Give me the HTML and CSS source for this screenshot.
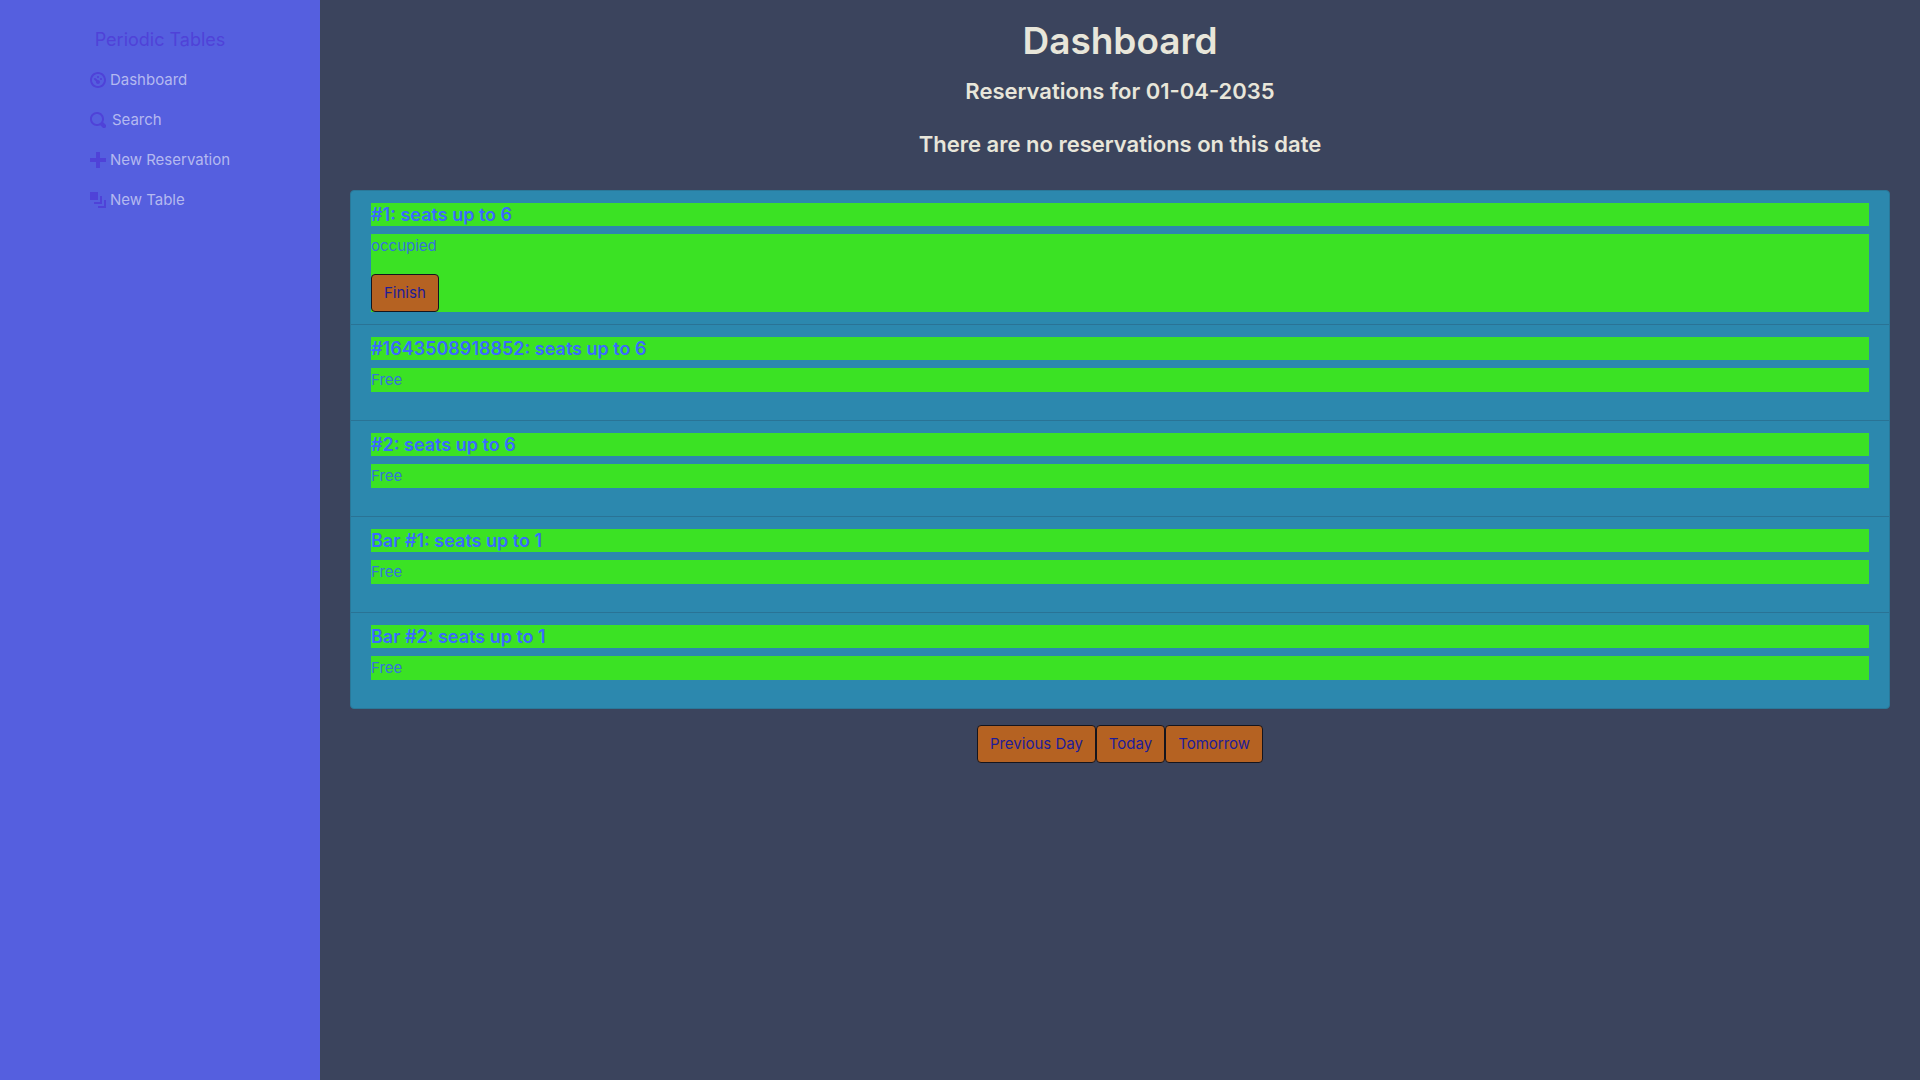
FILE: index.html
```html
<!DOCTYPE html>
<html lang="en">
<head>
<meta charset="utf-8">
<title>Periodic Tables</title>
<link rel="stylesheet" href="styles.css">
</head>
<body>
<div class="layout">
  <nav class="sidebar">
    <a class="brand" href="#">Periodic Tables</a>
    <ul class="menu">
      <li><a class="menu-link" href="#"><svg class="icon" viewBox="0 0 8 8" aria-hidden="true"><path d="M4 0c-2.2 0-4 1.8-4 4s1.8 4 4 4 4-1.8 4-4-1.8-4-4-4zm0 1c1.66 0 3 1.34 3 3s-1.34 3-3 3-3-1.34-3-3 1.34-3 3-3zm0 1c-.28 0-.5.22-.5.5s.22.5.5.5.5-.22.5-.5-.22-.5-.5-.5zm-1.66 1a.5.5 0 0 0-.19.84l.91.91c-.02.08-.06.16-.06.25 0 .55.45 1 1 1s1-.45 1-1-.45-1-1-1c-.09 0-.17.04-.25.06l-.91-.91a.5.5 0 0 0-.5-.15zm3.16 0c-.28 0-.5.22-.5.5s.22.5.5.5.5-.22.5-.5-.22-.5-.5-.5z"/></svg>Dashboard</a></li>
      <li><a class="menu-link menu-link-wide" href="#"><svg class="icon" viewBox="0 0 8 8" aria-hidden="true"><path d="M3.5 0c-1.93 0-3.5 1.57-3.5 3.5s1.57 3.5 3.5 3.5c.59 0 1.17-.14 1.66-.41a1 1 0 0 0 .13.13l1 1a1.02 1.02 0 1 0 1.44-1.44l-1-1a1 1 0 0 0-.16-.13c.27-.49.44-1.06.44-1.66 0-1.93-1.55-3.5-3.5-3.5zm0 1c1.39 0 2.5 1.11 2.5 2.5 0 .66-.24 1.27-.66 1.72l-.03.03a1 1 0 0 0-.13.13c-.44.4-1.04.63-1.69.63-1.39 0-2.5-1.11-2.5-2.5s1.11-2.5 2.5-2.5z"/></svg>Search</a></li>
      <li><a class="menu-link" href="#"><svg class="icon" viewBox="0 0 8 8" aria-hidden="true"><path d="M3 0v3h-3v2h3v3h2v-3h3v-2h-3v-3h-2z"/></svg>New Reservation</a></li>
      <li><a class="menu-link" href="#"><svg class="icon" viewBox="0 0 8 8" aria-hidden="true"><path d="M0 0v4h4v-4h-4zm5 2v3h-3v1h4v-4h-1zm2 2v3h-3v1h4v-4h-1z"/></svg>New Table</a></li>
    </ul>
  </nav>
  <main class="content">
    <h1 class="title">Dashboard</h1>
    <h2 class="subtitle">Reservations for 01-04-2035</h2>
    <h2 class="subtitle notice">There are no reservations on this date</h2>
    <ul class="tables">
      <li class="table-item">
        <h3 class="table-name">#1: seats up to 6</h3>
        <div class="status"><p class="status-text">occupied</p><button class="btn" type="button">Finish</button></div>
      </li>
      <li class="table-item">
        <h3 class="table-name">#1643508918852: seats up to 6</h3>
        <p class="status-text">Free</p>
      </li>
      <li class="table-item">
        <h3 class="table-name">#2: seats up to 6</h3>
        <p class="status-text">Free</p>
      </li>
      <li class="table-item">
        <h3 class="table-name">Bar #1: seats up to 1</h3>
        <p class="status-text">Free</p>
      </li>
      <li class="table-item">
        <h3 class="table-name">Bar #2: seats up to 1</h3>
        <p class="status-text">Free</p>
      </li>
    </ul>
    <div class="day-nav">
      <button class="btn" type="button">Previous Day</button>
      <button class="btn" type="button">Today</button>
      <button class="btn" type="button">Tomorrow</button>
    </div>
  </main>
</div>
</body>
</html>
```
FILE: styles.css
```css
*, *::before, *::after { box-sizing: border-box; }

body {
  margin: 0;
  font-family: Inter, "Liberation Sans", sans-serif;
  font-size: 15px;
  line-height: 24px;
  background: #3b445d;
  color: #e8e6da;
}

h1, h2, h3, p, ul { margin: 0; padding: 0; }
ul { list-style: none; }

.layout {
  display: grid;
  grid-template-columns: 1fr 5fr;
  min-height: 100vh;
}

.sidebar {
  display: flex;
  flex-direction: column;
  align-items: center;
  padding-top: 20px;
  background: #555fdf;
}

.brand {
  font-size: 18px;
  line-height: 40px;
  color: #4f42d8;
  text-decoration: none;
}

.menu-link {
  display: flex;
  align-items: center;
  gap: 4px;
  line-height: 40px;
  color: #b4b9f0;
  text-decoration: none;
}

.menu-link-wide { gap: 6px; }

.icon {
  width: 16px;
  height: 16px;
  fill: #4f42d8;
}

.content { padding: 17px 30px; }

.title, .subtitle {
  font-weight: 600;
  text-align: center;
}

.title {
  margin-bottom: 11px;
  font-size: 37px;
  line-height: 48px;
}

.subtitle {
  font-size: 22px;
  line-height: 30px;
}

.notice { margin: 23px 0 31px; }

.tables {
  overflow: hidden;
  border: 1px solid #2a7899;
  border-radius: 4px;
  background: #2c88ae;
}

.table-item { padding: 12px 20px; }
.table-item + .table-item { border-top: 1px solid #2a7395; }

.table-name {
  margin-bottom: 8px;
  font-size: 18px;
  font-weight: 600;
  line-height: 23px;
  color: #3a6aff;
  background: #3be224;
}

.status { background: #3be224; }

.status-text {
  margin-bottom: 16px;
  color: #3474dc;
  background: #3be224;
}

.btn {
  padding: 6px 12px;
  border: 1px solid #15151d;
  border-radius: 4px;
  font: inherit;
  color: #1d1d99;
  background: #b56222;
}

.status .btn { display: block; }

.day-nav {
  display: flex;
  justify-content: center;
  margin-top: 16px;
}
```
